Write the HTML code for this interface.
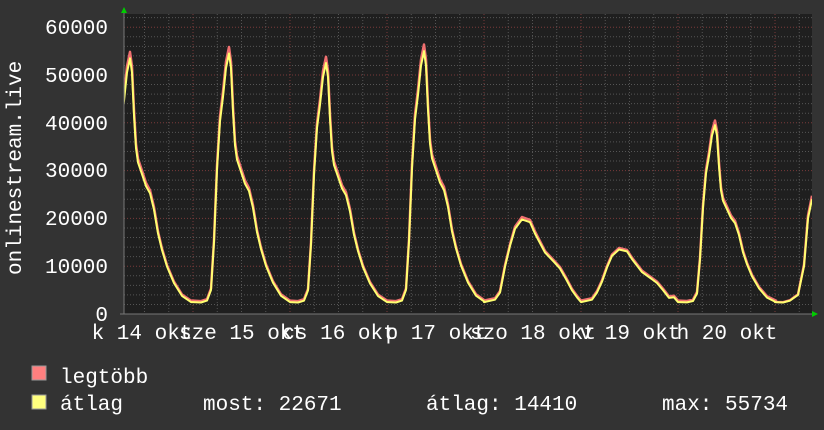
<!DOCTYPE html>
<html><head><meta charset="utf-8"><style>
html,body{margin:0;padding:0;background:#333;width:824px;height:430px;overflow:hidden}
svg{display:block}
text{font-family:"Liberation Mono","DejaVu Sans Mono",monospace;fill:#fff}
</style></head><body>
<svg id="s" width="824" height="430" xmlns="http://www.w3.org/2000/svg">
<rect width="824" height="430" fill="#333"/>
<rect x="124" y="14" width="688" height="300" fill="#1f1f1f"/>
<g id="grid"></g>
<defs><clipPath id="c"><rect x="124" y="12" width="688" height="303"/></clipPath></defs>
<g clip-path="url(#c)" stroke-linejoin="round">
<path id="mx" fill="none" stroke="#f07070" stroke-width="2.5"/>
<path id="av" fill="none" stroke="#ffff70" stroke-width="2"/>
</g>
<line x1="124" y1="10" x2="124" y2="314" stroke="#777" stroke-width="1"/>
<line x1="120" y1="314" x2="814" y2="314" stroke="#777" stroke-width="1"/>
<polygon points="121,13 127,13 124,7" fill="#0c0"/>
<polygon points="812,311 812,317 818,314" fill="#0c0"/>
<g font-size="21" text-anchor="end">
<text x="108" y="34">60000</text>
<text x="108" y="82">50000</text>
<text x="108" y="130">40000</text>
<text x="108" y="177">30000</text>
<text x="108" y="225">20000</text>
<text x="108" y="273">10000</text>
<text x="108" y="321">0</text>
</g>
<text font-size="21" transform="translate(21,275) rotate(-90)">onlinestream.live</text>
<g font-size="21" text-anchor="middle">
<text x="142" y="339">k 14 okt</text>
<text x="242" y="339">sze 15 okt</text>
<text x="339" y="339">cs 16 okt</text>
<text x="436" y="339">p 17 okt</text>
<text x="533" y="339">szo 18 okt</text>
<text x="630" y="339">v 19 okt</text>
<text x="727" y="339">h 20 okt</text>
</g>
<rect x="32" y="366" width="14" height="14" fill="#ff7f7f" stroke="#999"/>
<rect x="32" y="395" width="14" height="14" fill="#ffff7f" stroke="#999"/>
<g font-size="21">
<text x="60" y="383">legtöbb</text>
<text x="60" y="410">átlag</text>
<text x="203" y="410">most: 22671</text>
<text x="426" y="410">átlag: 14410</text>
<text x="662" y="410">max: 55734</text>
</g>
</svg>
<script>
var ns="http://www.w3.org/2000/svg",g=document.getElementById("grid");
function ln(x1,y1,x2,y2,c){var l=document.createElementNS(ns,"line");l.setAttribute("x1",x1);l.setAttribute("y1",y1);l.setAttribute("x2",x2);l.setAttribute("y2",y2);l.setAttribute("stroke",c);l.setAttribute("stroke-width","1");l.setAttribute("stroke-dasharray","1,2");g.appendChild(l);}
function Y(v){return 314-v*0.00478;}
for(var v=2000;v<=62000;v+=2000){var y=Y(v);ln(124,y,812,y,v%10000==0?"#7a3a3a":"#555");}
for(var x=193-97*1;x<812;x+=24.25){if(x>124)ln(x,14,x,314,"#555");}
for(var k=0;k<7;k++)ln(193+97*k,14,193+97*k,314,"#7a3a3a");
var big=[[0,2500],[8,2400],[14,2800],[18,5000],[21,15000],[24,30000],[27,40000],[30,45000],[33,51000],[36,54000],[38,51000],[40,42000],[42,35000],[44,32000],[48,29500],[52,27000],[56,25500],[60,22000],[64,17000],[68,13500],[73,10000],[80,6500],[88,3800],[97,2500]];
function small(P){return [[0,2500],[11,3000],[16,4500],[21,.5*P],[26,.72*P],[31,.9*P],[38,P],[46,.97*P],[51,.85*P],[61,.65*P],[70,.55*P],[76,.48*P],[82,.37*P],[88,.25*P],[93,3500],[97,2500]];}
function scaleBig(P,sh){return big.map(function(p){return [p[0]+sh,2500+(p[1]-2500)*(P-2500)/51500];});}
var days=[[96,scaleBig(53500,-2)],[193,scaleBig(54500,0)],[290,scaleBig(52500,0)],[387,scaleBig(55000,1)],[484,small(19800)],[581,small(13500)],[678,scaleBig(39500,1)]];
var pa=[],pm=[];
days.forEach(function(d){d[1].forEach(function(p){var x=d[0]+p[0],v=p[1];pa.push([x,v]);pm.push([x,v+(v>15000?v*0.025:300)]);});});
[[775,2500],[783,2400],[790,2800],[798,4000],[804,10000],[808,20000],[812,24000]].forEach(function(p){pa.push(p);pm.push([p[0],p[1]*1.03]);});
function path(a){return "M"+a.map(function(p){return p[0].toFixed(1)+","+Y(p[1]).toFixed(1);}).join(" L");}
document.getElementById("av").setAttribute("d",path(pa));
document.getElementById("mx").setAttribute("d",path(pm));
</script>
</body></html>
